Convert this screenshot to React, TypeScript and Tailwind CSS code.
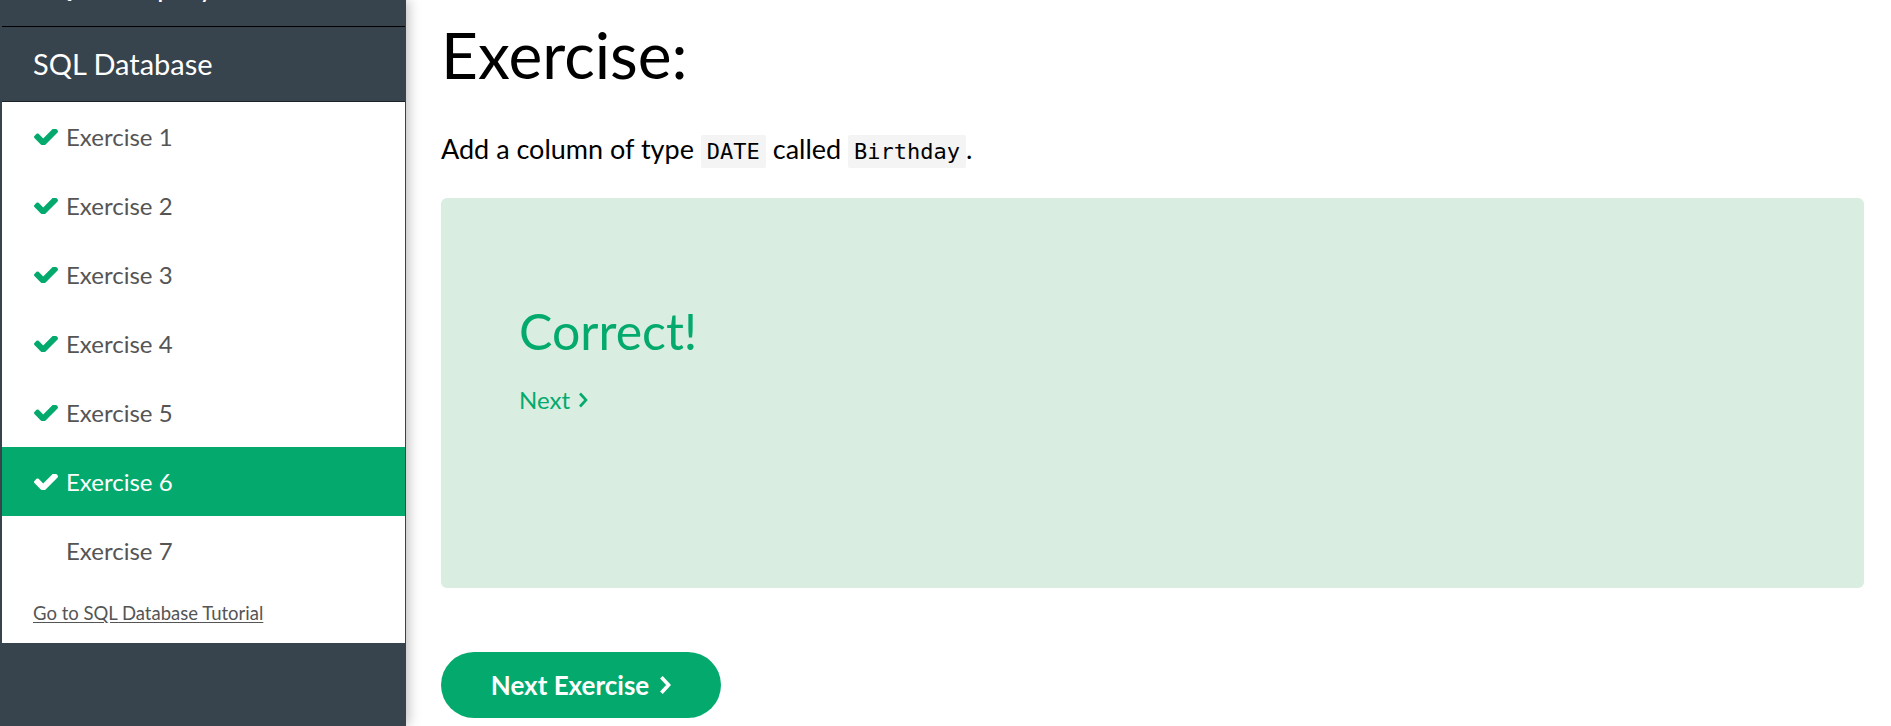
import React from 'react';

const CheckIcon = ({ className }: { className?: string }) => (
  <svg viewBox="121 430 1550 996" className={className} fill="currentColor">
    <path d="M1671 566q0 40-28 68l-724 724-136 136q-28 28-68 28t-68-28l-136-136-362-362q-28-28-28-68t28-68l136-136q28-28 68-28t68 28l294 295 656-657q28-28 68-28t68 28l136 136q28 28 28 68z" />
  </svg>
);

const Chevron = ({ className, weight = 2.8 }: { className?: string; weight?: number }) => (
  <svg viewBox="0 0 10 16" className={className} fill="none" stroke="currentColor" strokeWidth={weight} strokeLinecap="butt" strokeLinejoin="miter">
    <path d="M2 1.5l6 6.5-6 6.5" />
  </svg>
);

const exercises = [
  { id: 1, done: true },
  { id: 2, done: true },
  { id: 3, done: true },
  { id: 4, done: true },
  { id: 5, done: true },
  { id: 6, done: true, active: true },
  { id: 7, done: false },
];

export default function App() {
  return (
    <div className="flex h-[726px] overflow-hidden bg-white font-['Lato',sans-serif]">
      {/* Sidebar */}
      <aside className="relative z-10 w-[406px] shrink-0 bg-[#38444d] pl-[2px] pr-[1px] shadow-[2px_0_12px_rgba(0,0,0,0.28)]">
        <div className="-mt-[48px] flex h-[75px] items-center border-b border-black pb-[6px] pl-[31px] text-[29px] text-white">
          SQL Group By
        </div>
        <div className="flex h-[74px] items-center pl-[31px] text-[29px] text-white">SQL Database</div>

        <div className="border-t border-[#1c2329] bg-white">
          {exercises.map((ex) => (
            <div
              key={ex.id}
              className={`flex h-[69px] items-center pl-[32px] text-[24px] ${
                ex.active ? 'bg-[#04aa6d] text-white' : 'text-[#555]'
              }`}
            >
              <span className="flex w-[32px] items-center">
                {ex.done && (
                  <CheckIcon className={`h-[16px] w-[24px] ${ex.active ? 'text-white' : 'text-[#04aa6d]'}`} />
                )}
              </span>
              <span className="pt-[1px]">Exercise {ex.id}</span>
            </div>
          ))}
          <div className="flex h-[58px] items-center pl-[31px]">
            <a href="#" className="text-[18.5px] text-[#555] underline underline-offset-2">
              Go to SQL Database Tutorial
            </a>
          </div>
        </div>
      </aside>

      {/* Main */}
      <main className="flex-1 pl-[35px] pr-[27px] text-black">
        <h1 className="mt-[23px] text-[64px] leading-none">Exercise:</h1>

        <p className="mt-[48px] text-[27px] leading-[28px]">
          Add a column of type{' '}
          <code className="rounded-[2px] bg-[#f4f4f4] px-[6px] py-[4px] font-['DejaVu_Sans_Mono',monospace] text-[22px]">DATE</code>{' '}
          called{' '}
          <code className="rounded-[2px] bg-[#f4f4f4] px-[6px] py-[4px] font-['DejaVu_Sans_Mono',monospace] text-[22px]">Birthday</code>.
        </p>

        <div className="mt-[32px] h-[390px] rounded-[6px] bg-[#d9eee1] pl-[78px] pt-[108px]">
          <h2 className="text-[50px] leading-none text-[#04aa6d]">Correct!</h2>
          <a href="#" className="mt-[32px] flex items-center gap-[8px] text-[24px] leading-none text-[#04aa6d]">
            Next
            <Chevron className="h-[18px] w-[10px]" weight={2.6} />
          </a>
        </div>

        <button className="mt-[64px] flex h-[66px] w-[280px] items-center justify-center gap-[10px] rounded-full bg-[#04aa6d] text-[26px] font-bold text-white">
          Next Exercise
          <Chevron className="h-[22px] w-[12px]" weight={3} />
        </button>
      </main>
    </div>
  );
}
